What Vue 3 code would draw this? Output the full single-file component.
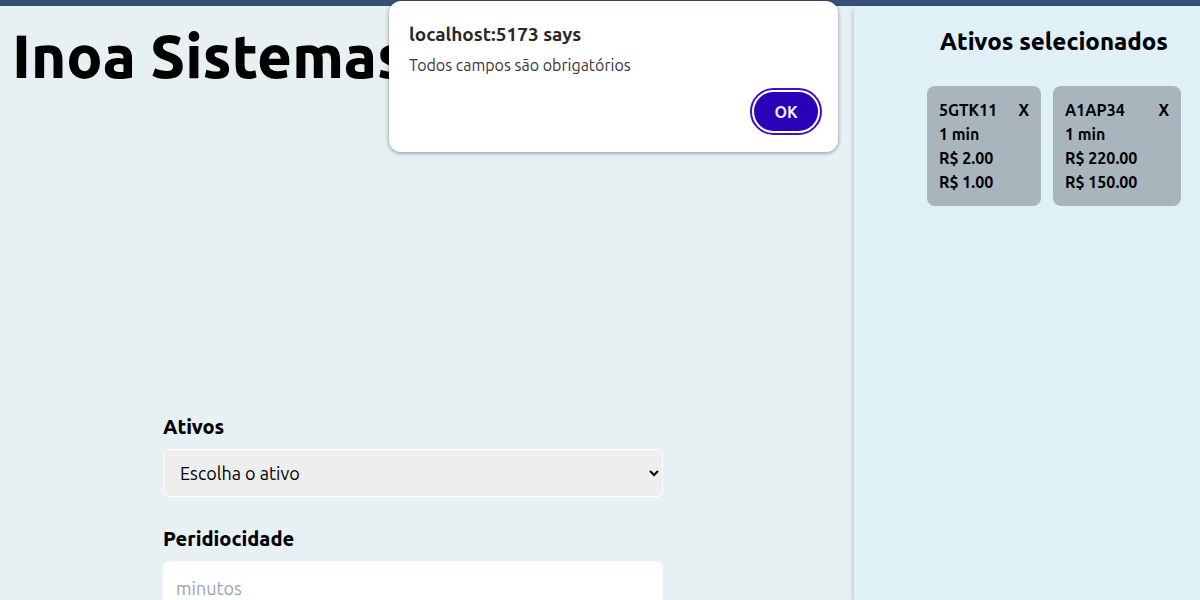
<script setup>
import { ref } from 'vue'

const asset = ref('')
const minutes = ref('')
const dialogOpen = ref(true)
const selected = ref([
  { code: '5GTK11', period: '1 min', high: 'R$ 2.00', low: 'R$ 1.00' },
  { code: 'A1AP34', period: '1 min', high: 'R$ 220.00', low: 'R$ 150.00' },
])
function remove(code) {
  selected.value = selected.value.filter((item) => item.code !== code)
}
</script>

<template>
  <div class="page">
    <header class="bar"></header>
    <div class="columns">
      <main class="main">
        <h1>Inoa Sistemas</h1>
        <form class="form" @submit.prevent>
          <label for="asset">Ativos</label>
          <div class="select-wrap">
            <select id="asset" v-model="asset">
              <option value="">Escolha o ativo</option>
              <option v-for="item in selected" :key="item.code">{{ item.code }}</option>
            </select>
            <svg class="chevron" viewBox="0 0 10 7" aria-hidden="true">
              <path d="M1 1 L5 5 L9 1" fill="none" stroke="#000" stroke-width="2" />
            </svg>
          </div>
          <label for="period">Peridiocidade</label>
          <input id="period" v-model="minutes" type="text" placeholder="minutos" />
        </form>
      </main>
      <aside class="side">
        <h2>Ativos selecionados</h2>
        <ul class="cards">
          <li v-for="item in selected" :key="item.code" class="card">
            <div class="card-head">
              <span>{{ item.code }}</span>
              <button type="button" @click="remove(item.code)">X</button>
            </div>
            <p>{{ item.period }}</p>
            <p>{{ item.high }}</p>
            <p>{{ item.low }}</p>
          </li>
        </ul>
      </aside>
    </div>
    <div
      v-if="dialogOpen"
      class="dialog"
      role="alertdialog"
      aria-labelledby="dialog-title"
      aria-describedby="dialog-text"
    >
      <h3 id="dialog-title">localhost:5173 says</h3>
      <p id="dialog-text">Todos campos são obrigatórios</p>
      <button type="button" class="ok" @click="dialogOpen = false">OK</button>
    </div>
  </div>
</template>

<style>
body {
  margin: 0;
}
</style>

<style scoped>
* {
  box-sizing: border-box;
}
.page {
  position: relative;
  display: flex;
  flex-direction: column;
  height: 100vh;
  overflow: hidden;
  background: #e7f0f3;
  color: #000;
  font-family: Ubuntu, "Open Sans", "Noto Sans", sans-serif;
}
.bar {
  flex: none;
  height: 6px;
  background: #375077;
}
.columns {
  display: flex;
  flex: 1;
  min-height: 0;
}
h1,
h2,
h3,
p,
ul {
  margin: 0;
  padding: 0;
}
.main {
  flex: 1;
  min-width: 0;
}
h1 {
  padding: 10px 12px 0;
  font-size: 60px;
  line-height: 80px;
  font-weight: 900;
  white-space: nowrap;
}
.form {
  display: flex;
  flex-direction: column;
  max-width: 500px;
  margin: 317px 0 0 163px;
}
label {
  margin-bottom: 8px;
  font-size: 20px;
  line-height: 28px;
  font-weight: 900;
}
.select-wrap {
  position: relative;
  margin-bottom: 28px;
}
select,
input {
  display: block;
  width: 100%;
  height: 48px;
  border: 1px solid #fff;
  border-radius: 6px;
  font: 18px/28px Ubuntu, "Open Sans", "Noto Sans", sans-serif;
  color: #000;
}
select {
  appearance: none;
  padding: 0 16px;
  background: #eee;
}
.chevron {
  position: absolute;
  top: 21px;
  right: 4px;
  width: 10px;
  height: 7px;
  pointer-events: none;
}
input {
  height: 54px;
  padding: 0 12px;
  background: #fff;
}
input::placeholder {
  color: #9ca3af;
  opacity: 1;
}
.side {
  padding: 20px 19px 0 73px;
  background: #dff0f7;
  box-shadow: 0 4px 6px rgba(0, 0, 0, 0.25);
}
h2 {
  padding-right: 13px;
  font-size: 24px;
  line-height: 32px;
  font-weight: 900;
  text-align: right;
}
.cards {
  display: flex;
  gap: 12px;
  margin-top: 28px;
  list-style: none;
}
.card {
  padding: 12px;
  border-radius: 8px;
  background: #a8b5bc;
  font-size: 16px;
  line-height: 24px;
  font-weight: 700;
}
.card:first-child {
  width: 114px;
}
.card:last-child {
  width: 128px;
}
.card-head {
  display: flex;
  justify-content: space-between;
}
.card button {
  padding: 0;
  border: 0;
  background: none;
  color: inherit;
  font: inherit;
}
.dialog {
  position: absolute;
  top: 1px;
  left: 389px;
  display: flex;
  flex-direction: column;
  width: 449px;
  padding: 20px;
  border-radius: 12px;
  background: #fff;
  box-shadow: 0 1px 4px rgba(0, 0, 0, 0.4);
  color: #282828;
}
h3 {
  font-size: 19px;
  line-height: 26px;
  font-weight: 700;
}
#dialog-text {
  margin-top: 6px;
  color: #383838;
  font-size: 16px;
  line-height: 24px;
}
.ok {
  align-self: flex-end;
  width: 64px;
  height: 39px;
  margin-top: 15px;
  margin-bottom: 1px;
  padding: 0;
  border: 0;
  border-radius: 20px;
  outline: 2px solid #3a10c8;
  outline-offset: 2px;
  background: #2b00b8;
  color: #f0eefa;
  font: 700 16px/24px Ubuntu, "Open Sans", "Noto Sans", sans-serif;
}
</style>
